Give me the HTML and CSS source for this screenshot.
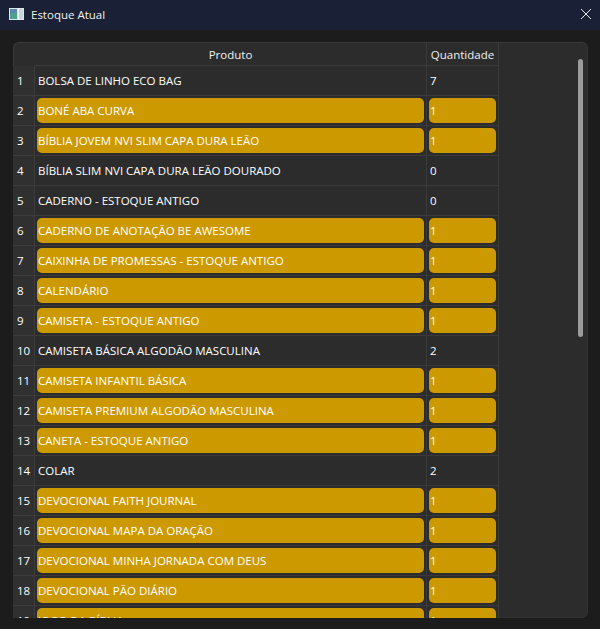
FILE: index.html
```html
<!DOCTYPE html>
<html lang="pt">
<head>
<meta charset="utf-8">
<title>Estoque Atual</title>
<link rel="stylesheet" href="styles.css">
</head>
<body>
<div class="window">
  <header class="titlebar">
    <svg class="app-icon" width="15" height="12" viewBox="0 0 15 12"><rect x="0" y="0" width="15" height="12" fill="#dfe4e6"/><rect x="1" y="1" width="7" height="10" fill="#4fa08e"/><rect x="1" y="1" width="7" height="4" fill="#5b86ad"/><rect x="10" y="1" width="4" height="10" fill="#c3d6dc"/><rect x="9" y="0" width="1" height="12" fill="#f5f7f7"/></svg>
    <span class="title">Estoque Atual</span>
    <svg class="close" width="12" height="12" viewBox="0 0 12 12"><path d="M1 1L11 11M11 1L1 11" stroke="#e8e8e8" stroke-width="1" fill="none"/></svg>
  </header>
  <main class="content">
    <section class="panel">
      <div class="table">
        <div class="corner"></div><div class="head">Produto</div><div class="head">Quantidade</div>
        <div class="num">1</div><div class="cell"><span class="val">BOLSA DE LINHO ECO BAG</span></div><div class="cell"><span class="val">7</span></div>
        <div class="num">2</div><div class="cell"><span class="val low">BONÉ ABA CURVA</span></div><div class="cell"><span class="val low">1</span></div>
        <div class="num">3</div><div class="cell"><span class="val low">BÍBLIA JOVEM NVI SLIM CAPA DURA LEÃO</span></div><div class="cell"><span class="val low">1</span></div>
        <div class="num">4</div><div class="cell"><span class="val">BÍBLIA SLIM NVI CAPA DURA LEÃO DOURADO</span></div><div class="cell"><span class="val">0</span></div>
        <div class="num">5</div><div class="cell"><span class="val">CADERNO - ESTOQUE ANTIGO</span></div><div class="cell"><span class="val">0</span></div>
        <div class="num">6</div><div class="cell"><span class="val low">CADERNO DE ANOTAÇÃO BE AWESOME</span></div><div class="cell"><span class="val low">1</span></div>
        <div class="num">7</div><div class="cell"><span class="val low">CAIXINHA DE PROMESSAS - ESTOQUE ANTIGO</span></div><div class="cell"><span class="val low">1</span></div>
        <div class="num">8</div><div class="cell"><span class="val low">CALENDÁRIO</span></div><div class="cell"><span class="val low">1</span></div>
        <div class="num">9</div><div class="cell"><span class="val low">CAMISETA - ESTOQUE ANTIGO</span></div><div class="cell"><span class="val low">1</span></div>
        <div class="num">10</div><div class="cell"><span class="val">CAMISETA BÁSICA ALGODÃO MASCULINA</span></div><div class="cell"><span class="val">2</span></div>
        <div class="num">11</div><div class="cell"><span class="val low">CAMISETA INFANTIL BÁSICA</span></div><div class="cell"><span class="val low">1</span></div>
        <div class="num">12</div><div class="cell"><span class="val low">CAMISETA PREMIUM ALGODÃO MASCULINA</span></div><div class="cell"><span class="val low">1</span></div>
        <div class="num">13</div><div class="cell"><span class="val low">CANETA - ESTOQUE ANTIGO</span></div><div class="cell"><span class="val low">1</span></div>
        <div class="num">14</div><div class="cell"><span class="val">COLAR</span></div><div class="cell"><span class="val">2</span></div>
        <div class="num">15</div><div class="cell"><span class="val low">DEVOCIONAL FAITH JOURNAL</span></div><div class="cell"><span class="val low">1</span></div>
        <div class="num">16</div><div class="cell"><span class="val low">DEVOCIONAL MAPA DA ORAÇÃO</span></div><div class="cell"><span class="val low">1</span></div>
        <div class="num">17</div><div class="cell"><span class="val low">DEVOCIONAL MINHA JORNADA COM DEUS</span></div><div class="cell"><span class="val low">1</span></div>
        <div class="num">18</div><div class="cell"><span class="val low">DEVOCIONAL PÃO DIÁRIO</span></div><div class="cell"><span class="val low">1</span></div>
        <div class="num">19</div><div class="cell"><span class="val low">JOGO DA BÍBLIA</span></div><div class="cell"><span class="val low">1</span></div>
      </div>
      <div class="scrollbar"></div>
    </section>
  </main>
</div>
</body>
</html>
```
FILE: styles.css
```css
* { box-sizing: border-box; }
html, body { margin: 0; height: 100%; background: #1c1c1c; overflow: hidden; }
body { font-family: "Open Sans", "Noto Sans", sans-serif; font-size: 11.5px; color: #fff; }
.window { width: 600px; height: 629px; display: flex; flex-direction: column; background: #1c1c1c; overflow: hidden; }
.titlebar { height: 30px; flex: none; display: flex; align-items: center; padding: 0 8px 2px 9px; background: #1a2035; }
.app-icon { flex: none; }
.title { margin-left: 7px; color: #f0f0f0; }
.close { margin-left: auto; }
.content { flex: none; height: 588px; padding: 12px 12px 0 13px; overflow: hidden; }
.panel { position: relative; height: 576px; background: #2c2c2c; border: 1px solid #323232; border-left-color: #3a3a3a; border-top-color: #3a3a3a; border-radius: 6px; }
.table { display: grid; grid-template-columns: 22px 392px 72px; grid-template-rows: 23px; grid-auto-rows: 30px; width: 486px; margin-left: -1px; }
.corner, .head, .num { display: flex; align-items: center; }
.head { justify-content: center; border-right: 1px solid #3a3a3a; border-bottom: 1px solid #3a3a3a; color: #f0f0f0; }
.num { padding-left: 4px; background: #303030; border-bottom: 1px solid #3c3c3c; border-right: 1px solid #3c3c3c; }
.cell { display: flex; padding: 2px; border-right: 1px solid #3a3a3a; border-bottom: 1px solid #3a3a3a; }
.val { flex: 1; display: flex; align-items: center; padding-left: 1px; border-radius: 5px; white-space: nowrap; }
.low { background: #cc9900; }
.scrollbar { position: absolute; top: 16px; left: 564px; width: 5px; height: 278px; border-radius: 3px; background: #9b9b9b; }
```
